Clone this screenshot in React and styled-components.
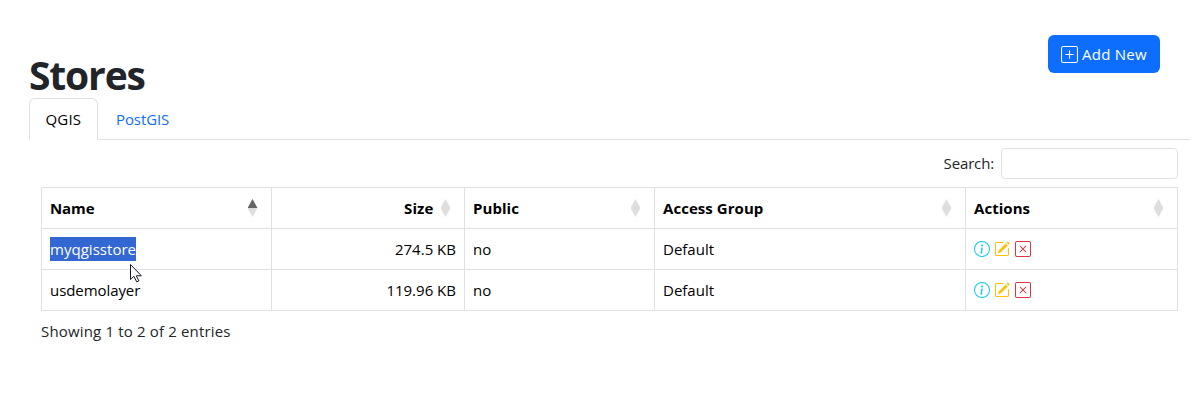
import React from "react";
import styled, { createGlobalStyle, css } from "styled-components";
import { BsPlusSquare, BsInfoCircle, BsPencilSquare, BsXSquare } from "react-icons/bs";

const GlobalStyle = createGlobalStyle`
  *, *::before, *::after { box-sizing: border-box; }
  body {
    margin: 0;
    background: #fff;
    color: #212529;
    font-family: "Segoe UI", "Open Sans", "Noto Sans", sans-serif;
    font-size: 15px;
    line-height: 24px;
  }
`;

const Page = styled.main`
  position: relative;
  height: 420px;
  padding: 35px 9px 0 29px;
  overflow: hidden;
`;

const Header = styled.header`
  display: flex;
  justify-content: space-between;
  align-items: flex-start;
  height: 63px;
  padding-right: 30px;
`;

const Title = styled.h1`
  margin: 16px 0 0;
  font-size: 39px;
  font-weight: 700;
  line-height: 48px;
`;

const Label = styled.span`
  display: inline-block;
  white-space: nowrap;
  letter-spacing: ${(p) => p.$track || 0}px;
`;

const AddButton = styled.button`
  display: flex;
  align-items: center;
  gap: 4px;
  width: 112px;
  height: 38px;
  padding: 0 0 0 13px;
  border: 0;
  border-radius: 6px;
  background: #0d6efd;
  color: #fff;
  font: inherit;
`;

const Tabs = styled.nav`
  display: flex;
  height: 42px;
  border-bottom: 1px solid #dee2e6;
`;

const Tab = styled.a`
  height: 42px;
  padding: 8px 16px 0 17px;
  border: 1px solid transparent;
  border-radius: 6px 6px 0 0;
  color: #0d6efd;
  ${(p) =>
    p.$active &&
    css`
      width: 69px;
      padding-left: 15.5px;
      border-color: #dee2e6 #dee2e6 #fff;
      background: #fff;
      color: #000;
    `}
`;

const Panel = styled.section`
  padding: 8px 12px 0 12px;
`;

const Search = styled.label`
  display: flex;
  justify-content: flex-end;
  gap: 7px;
  height: 31px;
  line-height: 30px;
`;

const SearchInput = styled.input`
  width: 177px;
  height: 31px;
  border: 1px solid #dee2e6;
  border-radius: 4px;
  background: #fff;
`;

const Table = styled.table`
  width: 1137px;
  margin-top: 8px;
  border-collapse: collapse;
  table-layout: fixed;
  color: #000;
`;

const Cell = styled.td`
  height: 41px;
  padding: 0 8px;
  border: 1px solid #dee2e6;
  text-align: ${(p) => (p.$right ? "right" : "left")};
`;

const HeadCell = styled(Cell)`
  font-weight: 700;
`;

const HeadContent = styled.div`
  display: flex;
  align-items: center;
  justify-content: ${(p) => (p.$right ? "flex-end" : "space-between")};
  gap: 7px;
  padding-right: 5.5px;
`;

const SortMark = styled.span`
  width: 10px;
  height: 18px;

  &::before,
  &::after {
    content: "";
    display: block;
    height: 9px;
    background: #dedede;
  }
  &::before {
    clip-path: polygon(50% 0, 100% 100%, 0 100%);
    ${(p) => p.$asc && "background: #666;"}
  }
  &::after {
    clip-path: polygon(0 0, 100% 0, 50% 100%);
  }
`;

const Selected = styled(Label)`
  background: #3367d1;
  color: #fff;
`;

const Actions = styled.div`
  display: flex;
  gap: 4.4px;
`;

const ActionIcon = styled.span`
  display: flex;
  color: ${(p) => p.$color};
`;

const Summary = styled.div`
  padding-top: 8px;
  white-space: nowrap;
`;

const Pointer = styled.svg`
  position: absolute;
  left: 130px;
  top: 264px;
`;

const columns = [
  { title: "Name", width: 230, track: -0.1, asc: true },
  { title: "Size", width: 193, track: 0.1, right: true },
  { title: "Public", width: 190, track: 0.05 },
  { title: "Access Group", width: 311, track: 0.05 },
  { title: "Actions", width: 212, track: 0.05 },
];

const stores = [
  { name: "myqgisstore", nameTrack: 0.03, size: "274.5 KB", sizeTrack: 0, selected: true },
  { name: "usdemolayer", nameTrack: -0.07, size: "119.96 KB", sizeTrack: 0 },
];

export default function App() {
  return (
    <Page>
      <GlobalStyle />
      <Header>
        <Title><Label $track={-1.15}>Stores</Label></Title>
        <AddButton>
          <BsPlusSquare size={17} />
          <Label $track={0.25}>Add New</Label>
        </AddButton>
      </Header>
      <Tabs>
        <Tab $active><Label $track={0.2}>QGIS</Label></Tab>
        <Tab><Label $track={-0.1}>PostGIS</Label></Tab>
      </Tabs>
      <Panel>
        <Search>
          <Label $track={-0.15}>Search:</Label>
          <SearchInput />
        </Search>
        <Table>
          <colgroup>
            {columns.map((c) => <col key={c.title} width={c.width} />)}
          </colgroup>
          <thead>
            <tr>
              {columns.map((c) => (
                <HeadCell as="th" key={c.title} $right={c.right}>
                  <HeadContent $right={c.right}>
                    <Label $track={c.track}>{c.title}</Label>
                    <SortMark $asc={c.asc} />
                  </HeadContent>
                </HeadCell>
              ))}
            </tr>
          </thead>
          <tbody>
            {stores.map((s) => {
              const Name = s.selected ? Selected : Label;
              return (
                <tr key={s.name}>
                  <Cell><Name $track={s.nameTrack}>{s.name}</Name></Cell>
                  <Cell $right><Label $track={s.sizeTrack}>{s.size}</Label></Cell>
                  <Cell><Label>no</Label></Cell>
                  <Cell><Label>Default</Label></Cell>
                  <Cell>
                    <Actions>
                      <ActionIcon $color="#0dcaf0"><BsInfoCircle size={16} /></ActionIcon>
                      <ActionIcon $color="#ffc107"><BsPencilSquare size={16} /></ActionIcon>
                      <ActionIcon $color="#dc3545"><BsXSquare size={16} /></ActionIcon>
                    </Actions>
                  </Cell>
                </tr>
              );
            })}
          </tbody>
        </Table>
        <Summary><Label $track={0.16}>Showing 1 to 2 of 2 entries</Label></Summary>
      </Panel>
      <Pointer width="13" height="20" viewBox="0 0 13 20">
        <path d="M.5.5v15l3.4-3.2 2.8 5.6 2.2-1-2.6-5.1h5.1z" fill="#fff" stroke="#1a1a2a" />
      </Pointer>
    </Page>
  );
}
